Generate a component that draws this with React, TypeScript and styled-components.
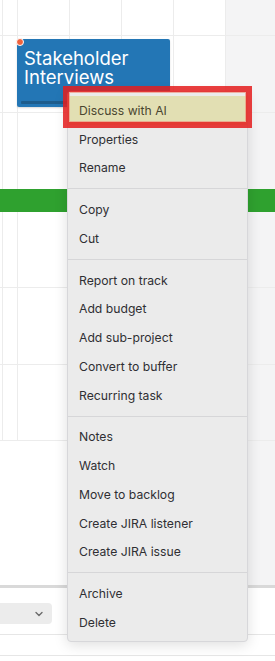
import React from "react";
import styled, { createGlobalStyle } from "styled-components";

const Global = createGlobalStyle`
  html, body { margin: 0; padding: 0; background: #ffffff; }
  body { font-family: Inter, "Noto Sans", "Liberation Sans", sans-serif; }
  * { box-sizing: border-box; }
`;

const Page = styled.div`
  position: relative;
  width: 275px;
  height: 661px;
  overflow: hidden;
  background: #ffffff;
  display: flex;
  flex-direction: column;
`;

const Canvas = styled.div`
  height: 585px;
  flex: none;
  display: flex;
  flex-direction: column;
  background: linear-gradient(to right, transparent 225px, #f4f4f5 225px);
`;

const Grid = styled.div`
  display: flex;
  flex-direction: column;
  background-image: repeating-linear-gradient(
    to right,
    #ececec 0px,
    #ececec 1px,
    transparent 1px,
    transparent 52px
  );
  background-position: 17px 0;
`;

const Row = styled.div<{ $h: number; $noLine?: boolean }>`
  height: ${(p) => p.$h}px;
  border-bottom: ${(p) => (p.$noLine ? "none" : "1px solid #ececec")};
`;

const GreenBar = styled.div`
  height: 23px;
  background: #2fa12f;
`;

const Panel = styled.div`
  flex: 1;
  border-top: 3px solid #d9d9d9;
  display: flex;
  flex-direction: column;
`;

const Toolbar = styled.div`
  height: 47px;
  border-bottom: 1px solid #e6e6e6;
  display: flex;
  align-items: center;
  padding-top: 5px;
`;

const Select = styled.div`
  width: 52px;
  height: 21px;
  background: #ececec;
  border-radius: 0 4px 4px 0;
  display: flex;
  align-items: center;
  justify-content: flex-end;
  padding-right: 8px;
  color: #666;
`;

const SubRow = styled.div`
  height: 21px;
  border-bottom: 1px solid #e6e6e6;
`;

const Card = styled.div`
  position: absolute;
  left: 17px;
  top: 39px;
  width: 153px;
  height: 68px;
  background: #2376b5;
  border-radius: 2px;
  padding: 10px 0 0 7px;
  color: #ffffff;
  box-shadow: 0 1px 2px rgba(0, 0, 0, 0.15);
  display: flex;
  flex-direction: column;
`;

const CardLine = styled.div`
  height: 19px;
  font-size: 18.5px;
  line-height: 19px;
  white-space: nowrap;
`;

const CardProgress = styled.div`
  position: absolute;
  left: 4px;
  bottom: 3px;
  width: 90px;
  height: 3px;
  border-radius: 1px;
  background: #1d5c8c;
`;

const Dot = styled.div`
  position: absolute;
  left: 16px;
  top: 38px;
  width: 8px;
  height: 8px;
  border-radius: 50%;
  background: #f0623c;
  border: 1px solid #ffffff;
`;

const Menu = styled.div`
  position: absolute;
  left: 67px;
  top: 91px;
  width: 181px;
  background: #ebebeb;
  border: 1px solid #d7d7da;
  border-radius: 4px;
  padding: 4px 0 4px;
  box-shadow: 0 3px 14px rgba(0, 0, 0, 0.13);
`;

const Item = styled.div<{ $active?: boolean }>`
  height: 28.75px;
  display: flex;
  align-items: center;
  padding-left: 11px;
  font-size: 12.2px;
  color: ${(p) => (p.$active ? "#4a4630" : "#2f2f33")};
  background: ${(p) => (p.$active ? "#e2dfb3" : "transparent")};
  white-space: nowrap;
`;

const Sep = styled.div`
  height: 1px;
  margin: 6px 0;
  background: #d6d6d8;
`;

const Highlight = styled.div`
  position: absolute;
  left: 63px;
  top: 86px;
  width: 189px;
  height: 42px;
  border: 6px solid rgba(228, 30, 30, 0.86);
  box-shadow: inset 0 0 0 1px rgba(240, 150, 130, 0.7);
  pointer-events: none;
`;

const groups: string[][] = [
  ["Discuss with AI", "Properties", "Rename"],
  ["Copy", "Cut"],
  ["Report on track", "Add budget", "Add sub-project", "Convert to buffer", "Recurring task"],
  ["Notes", "Watch", "Move to backlog", "Create JIRA listener", "Create JIRA issue"],
  ["Archive", "Delete"],
];

const Chevron = () => (
  <svg width="10" height="10" viewBox="0 0 10 10" fill="none">
    <path d="M2 3.5 L5 6.5 L8 3.5" stroke="#6b6b6b" strokeWidth="1.4" strokeLinecap="round" strokeLinejoin="round" />
  </svg>
);

export default function App() {
  return (
    <Page>
      <Global />
      <Canvas>
        <Grid>
          <Row $h={36} />
          <Row $h={77} />
          <Row $h={76} $noLine />
          <GreenBar />
          <Row $h={76} />
          <Row $h={77} />
          <Row $h={76} />
        </Grid>
      </Canvas>
      <Panel>
        <Toolbar>
          <Select>
            <Chevron />
          </Select>
        </Toolbar>
        <SubRow />
      </Panel>

      <Card>
        <CardLine>Stakeholder</CardLine>
        <CardLine>Interviews</CardLine>
        <CardProgress />
      </Card>
      <Dot />

      <Menu>
        {groups.map((g, gi) => (
          <React.Fragment key={gi}>
            {gi > 0 && <Sep />}
            {g.map((label) => (
              <Item key={label} $active={label === "Discuss with AI"}>
                {label}
              </Item>
            ))}
          </React.Fragment>
        ))}
      </Menu>
      <Highlight />
    </Page>
  );
}
